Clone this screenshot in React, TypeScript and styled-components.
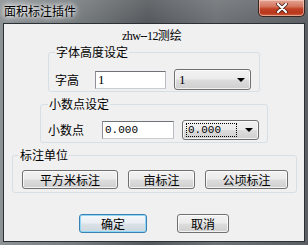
import React from "react";
import styled, { createGlobalStyle, css } from "styled-components";

const GlobalStyle = createGlobalStyle`
  html, body { margin: 0; padding: 0; background: #5f6468; }
  body { font-family: "Noto Sans CJK SC", "Noto Sans", sans-serif; font-size: 12px; color: #000; }
  * { box-sizing: border-box; }
`;

const Window = styled.div`
  width: 308px;
  height: 245px;
  display: flex;
  flex-direction: column;
  background:
    linear-gradient(180deg, rgba(255,255,255,0.10) 0px, rgba(255,255,255,0) 23px),
    linear-gradient(90deg, #8d9295 0%, #767b7e 25%, #55595d 48%, #6e7276 70%, #5c6064 100%);
`;

const TitleBar = styled.div`
  height: 23px;
  flex: none;
  display: flex;
  align-items: flex-start;
  justify-content: space-between;
`;

const Title = styled.div`
  padding: 4px 0 0 4px;
  font-size: 12px;
  line-height: 14px;
  color: #000;
  text-shadow: 0 0 4px #fff, 0 0 6px rgba(255,255,255,0.9), 0 0 8px rgba(255,255,255,0.7);
`;

const CloseButton = styled.div`
  width: 47px;
  height: 17px;
  margin-right: 3px;
  display: flex;
  align-items: center;
  justify-content: center;
  border: 1px solid #3b2420;
  border-top: none;
  border-radius: 0 0 5px 5px;
  background: linear-gradient(180deg, #e3a594 0%, #d4765f 40%, #c24327 55%, #b8361c 80%, #d0603e 100%);
  box-shadow: inset 0 0 0 1px rgba(255,220,210,0.55);
`;

const Frame = styled.div`
  flex: 1;
  display: flex;
  padding: 0 3px 3px 3px;
`;

const Client = styled.div`
  flex: 1;
  display: flex;
  flex-direction: column;
  align-items: flex-start;
  border: 1px solid #2b3034;
  background: #f0f0f0;
`;

const Heading = styled.div`
  align-self: stretch;
  margin-top: 4px;
  padding-left: 118px;
  line-height: 14px;
  height: 14px;
  white-space: nowrap;
`;

const Latin = styled.span`
  font-family: "Liberation Serif", serif;
  font-size: 12px;
  letter-spacing: -0.6px;
`;

const GroupBox = styled.fieldset<{ $left: number; $width: number; $top: number; $inset: number; $padTop: number; $padBottom: number }>`
  margin: ${(p) => p.$top}px 0 0 ${(p) => p.$left}px;
  width: ${(p) => p.$width}px;
  padding: ${(p) => p.$padTop}px 0 ${(p) => p.$padBottom}px ${(p) => p.$inset}px;
  border: 1px solid #d5dfe5;
  border-radius: 3px;
  min-width: 0;
`;

const Legend = styled.legend<{ $shift: number }>`
  padding: 0 1px;
  margin-left: ${(p) => p.$shift}px;
  line-height: 14px;
  height: 14px;
`;

const Row = styled.div<{ $gap?: number }>`
  display: flex;
  align-items: center;
  gap: ${(p) => p.$gap ?? 0}px;
`;

const Label = styled.span<{ $width: number }>`
  width: ${(p) => p.$width}px;
  line-height: 14px;
  font-size: 12px;
`;

const TextBox = styled.input<{ $width: number; $mono?: boolean }>`
  width: ${(p) => p.$width}px;
  height: 18px;
  margin: 0 8px 0 0;
  padding: 0 2px;
  border: 1px solid;
  border-color: #6f7378 #b8bcc2 #c9ccd0 #8d9196;
  background: #fff;
  font-family: ${(p) => (p.$mono ? '"Liberation Mono", monospace' : '"Liberation Serif", serif')};
  font-size: ${(p) => (p.$mono ? 11 : 13)}px;
  color: #000;
  outline: none;
`;

const Combo = styled.div<{ $width: number; $height: number }>`
  width: ${(p) => p.$width}px;
  height: ${(p) => p.$height}px;
  display: flex;
  align-items: center;
  padding: 0 5px 0 3px;
  border: 1px solid #707070;
  border-radius: 3px;
  background: linear-gradient(180deg, #f2f2f2 0%, #ebebeb 49%, #dddddd 51%, #cfcfcf 100%);
  box-shadow: inset 0 0 0 1px rgba(255,255,255,0.7);
`;

const ComboText = styled.div<{ $focus?: boolean }>`
  flex: 1;
  height: 14px;
  line-height: 13px;
  padding-left: 1px;
  font-family: "Liberation Serif", serif;
  font-size: 13px;
  ${(p) =>
    p.$focus &&
    css`
      border: 1px dotted #000;
      margin-right: 8px;
      font-family: "Liberation Mono", monospace;
      font-size: 11px;
    `}
`;

const Button = styled.button<{ $width: number; $default?: boolean }>`
  width: ${(p) => p.$width}px;
  height: 19px;
  margin: 0;
  padding: 0;
  border: 1px solid #707070;
  border-radius: 3px;
  background: linear-gradient(180deg, #f2f2f2 0%, #ebebeb 49%, #dddddd 51%, #cfcfcf 100%);
  box-shadow: inset 0 0 0 1px rgba(255,255,255,0.75);
  font-family: "Noto Sans CJK SC", sans-serif;
  font-size: 12px;
  line-height: 14px;
  color: #000;
  ${(p) =>
    p.$default &&
    css`
      border-color: #3c7fb1;
      background: linear-gradient(180deg, #f4f8fb 0%, #e9eef2 49%, #dbe2e8 51%, #ced7de 100%);
      box-shadow: inset 0 0 0 1px #8fd8f5;
    `}
`;

const FooterRow = styled.div`
  display: flex;
  gap: 30px;
  margin: 21px 0 0 75px;
`;

const ArrowIcon = () => (
  <svg width="8" height="4" viewBox="0 0 8 4">
    <path d="M0 0H8L4 4Z" fill="#000" />
  </svg>
);

const CloseIcon = () => (
  <svg width="12" height="10" viewBox="0 0 12 10">
    <path d="M2 1L10 9M10 1L2 9" stroke="#3a1a14" strokeWidth="3.6" strokeLinecap="round" />
    <path d="M2 1L10 9M10 1L2 9" stroke="#fff" strokeWidth="2.2" strokeLinecap="round" />
  </svg>
);

export default function App() {
  return (
    <>
      <GlobalStyle />
      <Window>
        <TitleBar>
          <Title>面积标注插件</Title>
          <CloseButton>
            <CloseIcon />
          </CloseButton>
        </TitleBar>
        <Frame>
          <Client>
            <Heading>
              <Latin>zhw--12</Latin>测绘
            </Heading>

            <GroupBox $left={44} $width={212} $top={3} $inset={6} $padTop={10} $padBottom={1}>
              <Legend $shift={0}>字体高度设定</Legend>
              <Row>
                <Label $width={40}>字高</Label>
                <TextBox $width={71} defaultValue="1" readOnly />
                <Combo $width={77} $height={21}>
                  <ComboText>1</ComboText>
                  <ArrowIcon />
                </Combo>
              </Row>
            </GroupBox>

            <GroupBox $left={36} $width={228} $top={5} $inset={7} $padTop={9} $padBottom={2}>
              <Legend $shift={0}>小数点设定</Legend>
              <Row>
                <Label $width={54}>小数点</Label>
                <TextBox $width={72} $mono defaultValue="0.000" readOnly />
                <Combo $width={77} $height={20}>
                  <ComboText $focus>0.000</ComboText>
                  <ArrowIcon />
                </Combo>
              </Row>
            </GroupBox>

            <GroupBox $left={8} $width={285} $top={5} $inset={9} $padTop={8} $padBottom={3}>
              <Legend $shift={-3}>标注单位</Legend>
              <Row $gap={10}>
                <Button $width={96}>平方米标注</Button>
                <Button $width={67}>亩标注</Button>
                <Button $width={83}>公顷标注</Button>
              </Row>
            </GroupBox>

            <FooterRow>
              <Button $width={68} $default>确定</Button>
              <Button $width={52}>取消</Button>
            </FooterRow>
          </Client>
        </Frame>
      </Window>
    </>
  );
}
